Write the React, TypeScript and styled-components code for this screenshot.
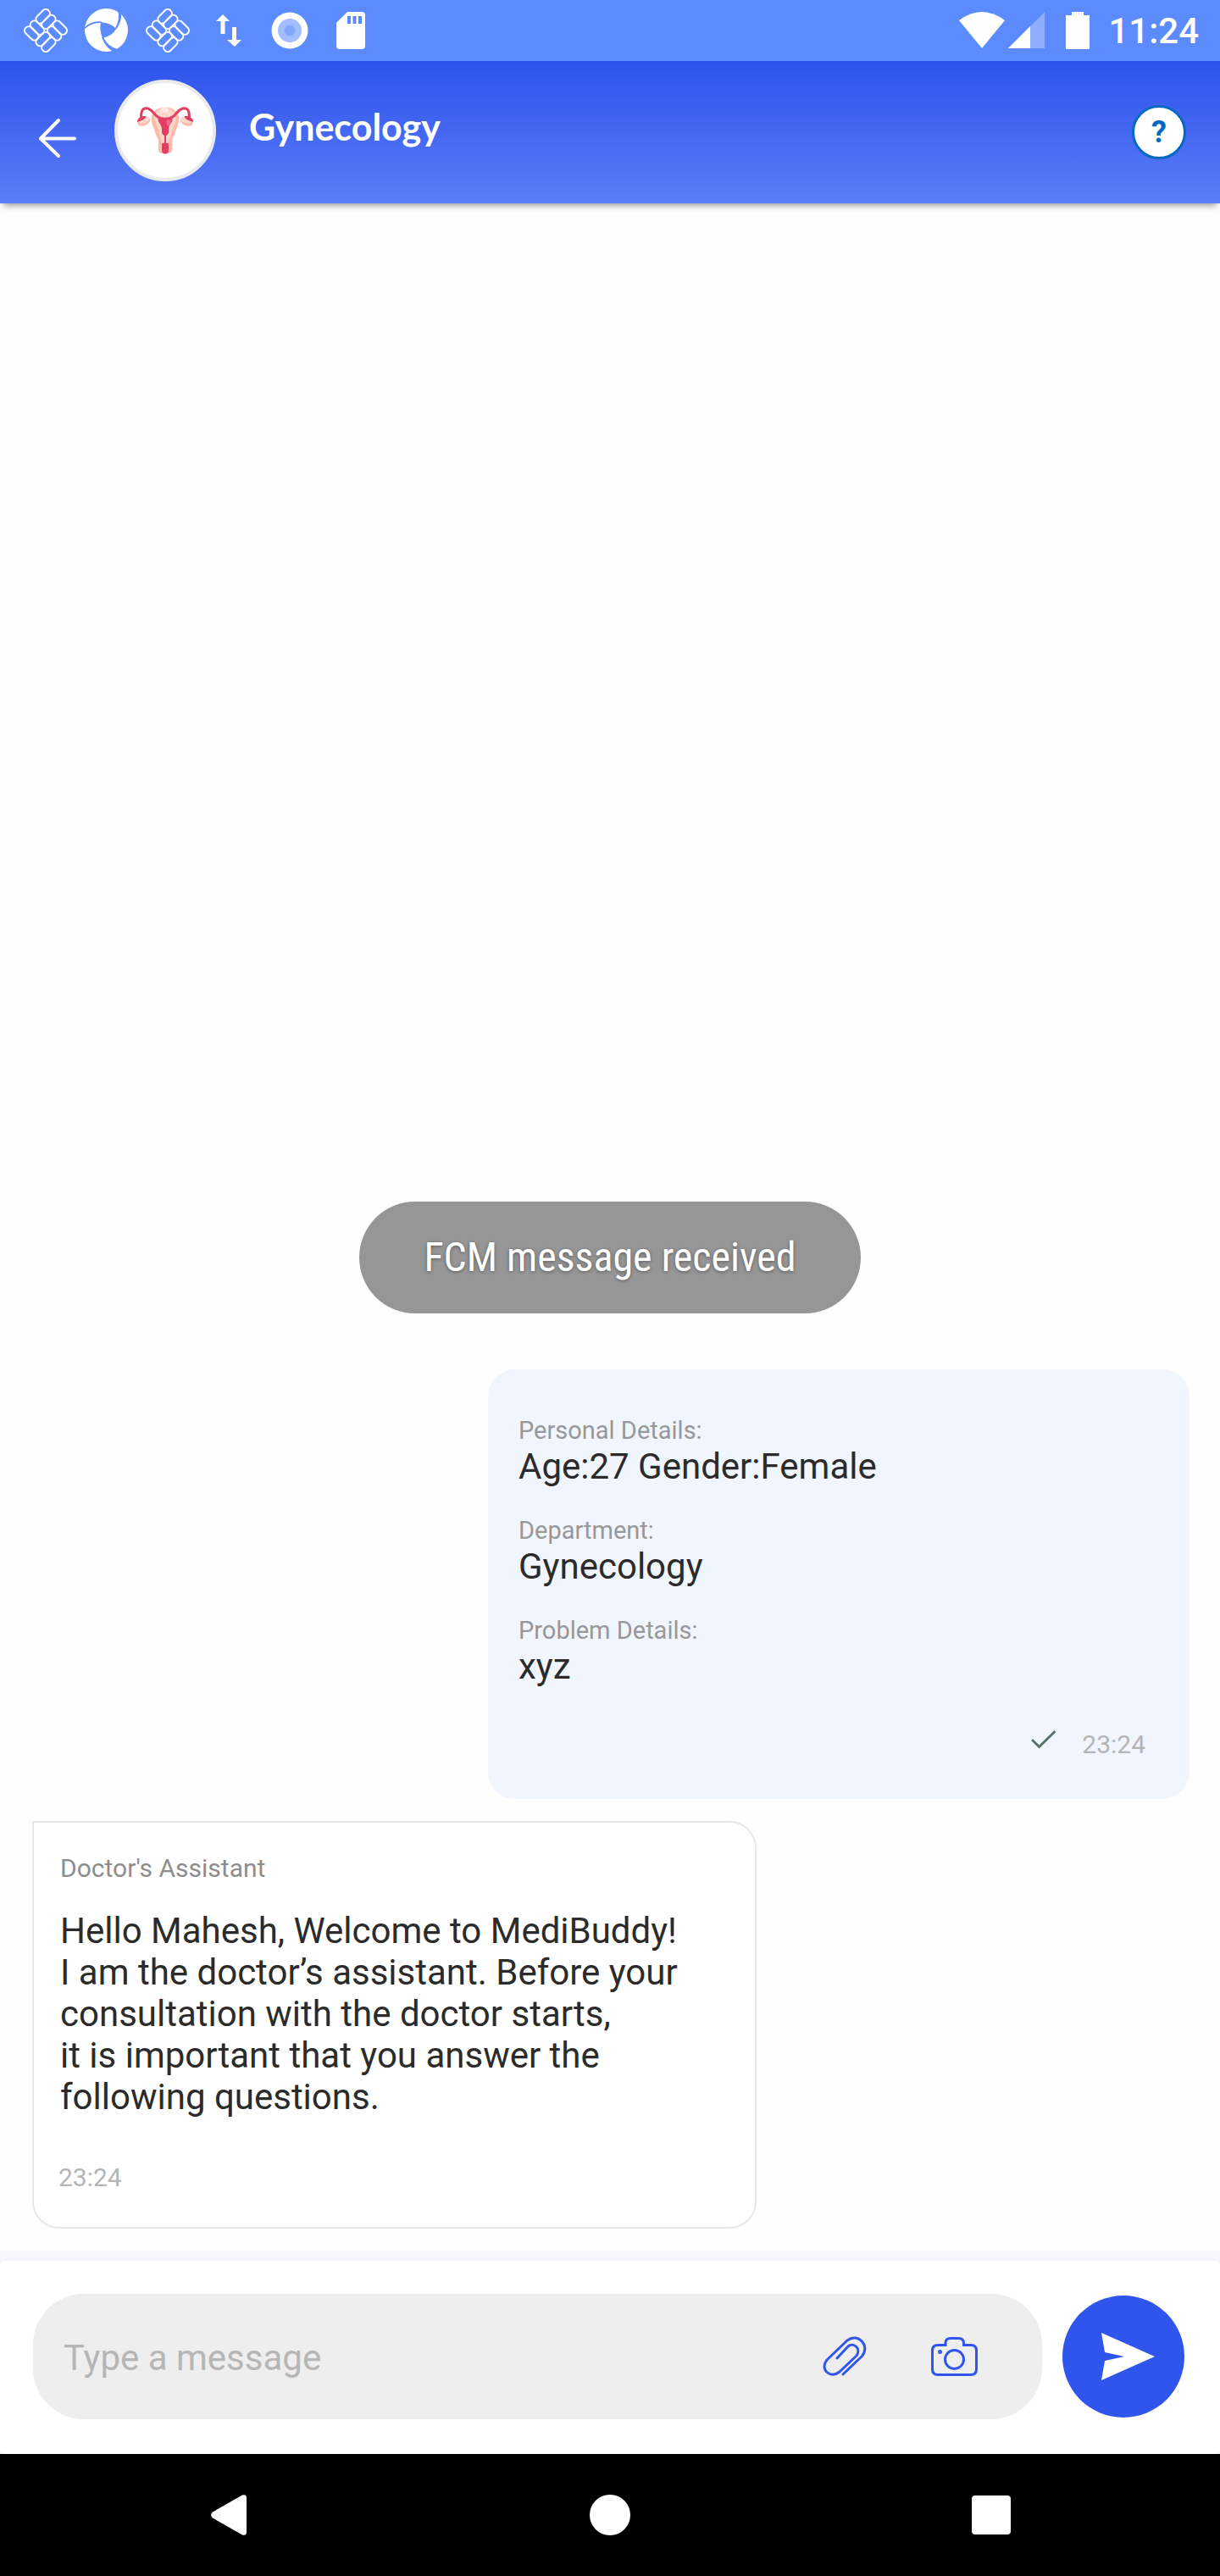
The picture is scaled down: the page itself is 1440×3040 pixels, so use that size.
import React from 'react';
import styled, { createGlobalStyle } from 'styled-components';

const GlobalStyle = createGlobalStyle`
  *, *::before, *::after { box-sizing: border-box; }
  body {
    margin: 0;
    background: #fefefe;
    font-family: Roboto, "Noto Sans", sans-serif;
    color: #2b2b2b;
  }
  h1, p, dl, dt, dd { margin: 0; }
  button { border: 0; padding: 0; background: none; font: inherit; cursor: pointer; }
  svg { display: block; flex: none; }
`;

const Screen = styled.div`
  display: flex;
  flex-direction: column;
  min-height: 100vh;
`;

const StatusBar = styled.div`
  display: flex;
  justify-content: space-between;
  align-items: center;
  height: 72px;
  padding: 0 25px 0 18px;
  background: #5c8bfd;
  color: #fff;
`;

const NotificationIcons = styled.div`
  display: grid;
  grid-auto-flow: column;
  grid-auto-columns: 72px;
  justify-items: center;
  align-items: center;
`;

const SystemIcons = styled.div`
  display: flex;
  align-items: center;
`;

const Battery = styled.svg`
  margin: 0 22px 0 24px;
`;

const Clock = styled.time`
  padding-top: 2px;
  font-size: 42px;
  line-height: 48px;
  font-weight: 500;
`;

const AppBar = styled.header`
  display: flex;
  align-items: center;
  height: 168px;
  padding: 0 40px 0 36px;
  background: linear-gradient(#2e53eb, #5a7df8);
  box-shadow: 0 6px 8px -4px rgba(0, 0, 0, 0.45);
  color: #fff;
`;

const BackButton = styled.button`
  width: 63px;
  margin-right: 36px;
  color: #fff;
  && { padding: 14px 0 0 8px; }
`;

const Avatar = styled.div`
  display: grid;
  place-items: center;
  width: 120px;
  height: 120px;
  margin-bottom: 4px;
  border: 4px solid #e9eaee;
  border-radius: 50%;
  background: #fff;
`;

const Title = styled.h1`
  flex: 1;
  padding: 0 0 12px 39px;
  font-family: Lato, "Open Sans", sans-serif;
  font-size: 43px;
  line-height: 50px;
  font-weight: 700;
`;

const HelpButton = styled.button`
  && {
    width: 64px;
    height: 64px;
    border: 3px solid #0569c4;
    border-radius: 50%;
    background: #fff;
    color: #0569c4;
    font-size: 36px;
    line-height: 58px;
    font-weight: 700;
  }
`;

const Chat = styled.main`
  flex: 1;
  display: flex;
  flex-direction: column;
  justify-content: flex-end;
  gap: 26px;
  padding: 40px 0 26px;
`;

const Toast = styled.div`
  align-self: center;
  margin-bottom: 40px;
  padding: 36px 76px;
  border-radius: 66px;
  background: #969696;
  color: #fff;
  font-family: "Roboto Condensed", Roboto, sans-serif;
  font-size: 48px;
  line-height: 60px;
  text-shadow: 0 1px 4px rgba(0, 0, 0, 0.4);
`;

const SentCard = styled.article`
  margin: 0 36px 0 40%;
  padding: 54px 52px 46px 36px;
  border-radius: 32px;
  background: #f0f5fe;
`;

const Details = styled.dl`
  display: flex;
  flex-direction: column;
  gap: 32px;
`;

const Label = styled.dt`
  font-size: 29px;
  line-height: 36px;
  color: #989898;
`;

const Value = styled.dd`
  font-size: 42px;
  line-height: 50px;
`;

const SentMeta = styled.div`
  display: flex;
  justify-content: flex-end;
  align-items: flex-start;
  gap: 30px;
  padding-top: 49px;
`;

const Stamp = styled.time`
  display: block;
  font-size: 30px;
  line-height: 36px;
  color: #b5b5b5;
`;

const ReceivedCard = styled.article`
  margin: 0 38% 0 38px;
  padding: 36px 29px 40px;
  border: 2px solid #e7e7e7;
  border-radius: 0 32px 32px 32px;
  background: #fff;
`;

const Sender = styled.p`
  padding-left: 2px;
  font-size: 30px;
  line-height: 36px;
  color: #8d8d8d;
`;

const Body = styled.p`
  padding: 31px 0 53px 2px;
  font-size: 42px;
  line-height: 49px;
  white-space: pre-line;
`;

const Footer = styled.footer`
  border-top: 12px solid #f4f6fc;
  background: #f4f6fc;
`;

const Composer = styled.form`
  display: flex;
  align-items: center;
  gap: 24px;
  padding: 39px 42px 41px 39px;
  border-radius: 6px;
  background: #fff;
`;

const Field = styled.div`
  flex: 1;
  display: flex;
  align-items: center;
  height: 148px;
  padding: 0 76px 0 36px;
  border-radius: 60px;
  background: #eee;
`;

const MessageInput = styled.input`
  flex: 1;
  min-width: 0;
  height: 62px;
  padding: 2px 0 0;
  border: 0;
  outline: 0;
  background: none;
  font: 42px/60px Roboto, "Noto Sans", sans-serif;
  color: #2b2b2b;
  &::placeholder { color: #b6b6b6; opacity: 1; }
`;

const AttachButton = styled.button`
  && { margin-left: 76px; }
`;

const SendButton = styled.button`
  && {
    display: grid;
    place-items: center;
    width: 144px;
    height: 144px;
    padding-left: 10px;
    border-radius: 50%;
    background: #2f55ec;
  }
`;

const NavBar = styled.nav`
  display: grid;
  grid-template-columns: repeat(3, 1fr);
  height: 144px;
  padding: 0 45px;
  background: #000;
`;

const NavButton = styled.button`
  display: grid;
  place-items: center;
`;

/* Four woven cells of two strands, turned to stand on a corner. */
function WeaveIcon() {
  const strands = [0, 1];
  return (
    <svg width="52" height="52" viewBox="0 0 52 52" fill="none" stroke="#fff" strokeWidth="2" aria-hidden="true">
      <g transform="rotate(45 26 26)">
        {strands.map((i) => (
          <React.Fragment key={i}>
            <rect x={7 + i * 9.5} y="7" width="9.5" height="19" rx="4.5" />
            <rect x="26" y={7 + i * 9.5} width="19" height="9.5" rx="4.5" />
            <rect x="7" y={26 + i * 9.5} width="19" height="9.5" rx="4.5" />
            <rect x={26 + i * 9.5} y="26" width="9.5" height="19" rx="4.5" />
          </React.Fragment>
        ))}
      </g>
    </svg>
  );
}

function SwirlIcon() {
  return (
    <svg width="52" height="52" viewBox="0 0 52 52" aria-hidden="true">
      <circle cx="25.5" cy="25.5" r="25.5" fill="#fff" />
      <g fill="#5c8bfd">
        <path d="M19 16Q31 17 37 24Q33 32 21 35Q17 25 19 16Z" />
        <path d="M0 22Q8 14 20 15.500L20 17Q9 16 0 24Z" />
        <path d="M39 0L43 6Q44 15 37 25L36 23Q42 14 39 0Z" />
        <path d="M22 34Q27 45 39 48L34 51Q25 47 20 34Z" />
      </g>
    </svg>
  );
}

function TransferIcon() {
  return (
    <svg width="30" height="40" viewBox="0 0 30 40" fill="#fff" aria-hidden="true">
      <path d="M8 1L16 9H10.500V24H5.500V9H0Z" />
      <path d="M22 39L30 31H24V16H19V31H13Z" />
    </svg>
  );
}

function RecordIcon() {
  return (
    <svg width="44" height="44" viewBox="0 0 44 44" aria-hidden="true">
      <circle cx="22" cy="22" r="21.500" fill="#fff" />
      <circle cx="22" cy="22" r="14" fill="#a3bfff" />
      <circle cx="22" cy="22" r="6.500" fill="#82a8ff" />
    </svg>
  );
}

function SdCardIcon() {
  return (
    <svg width="34" height="44" viewBox="0 0 34 44" aria-hidden="true">
      <path d="M13 0H30Q34 0 34 4V40Q34 44 30 44H4Q0 44 0 40V13Z" fill="#fff" />
      <path d="M13 5h4v9h-4zM19.500 5h4v9h-4zM26 5h4v9h-4z" fill="#5c8bfd" />
    </svg>
  );
}

function UterusIcon() {
  return (
    <svg width="70" height="60" viewBox="0 0 210 180" role="img" aria-label="Gynecology department">
      <path d="M105 8C134 8 155 24 154 48C153 72 142 84 140 98C138 112 128 114 129 130V160Q129 170 119 170H91Q81 170 81 160V130C82 114 72 112 70 98C68 84 57 72 56 48C55 24 76 8 105 8Z" fill="#ffbba8" />
      <path d="M105 12C130 12 143 26 143 46C142 64 129 80 127 98C124 112 118 116 118 134V164H92V134C92 116 86 112 83 98C81 80 68 64 67 46C67 26 80 12 105 12Z" fill="#ffd6cc" />
      <ellipse cx="103" cy="18" rx="14" ry="9" fill="#ffe9e4" />
      <path d="M80 46H130C134 60 118 68 117 84V98Q114 106 108 108V134H116Q117 138 117 160Q117 173 105 173Q93 173 93 160Q93 138 94 134H102V108Q96 106 93 98V84C92 68 76 60 80 46Z" fill="#e23d63" />
      <path d="M110 46H124Q126 60 120 74Q110 74 110 62Z" fill="#ee6a8b" />
      <g fill="none" stroke="#e23d63" strokeWidth="9">
        <path d="M105 49C62 49 66 11 37 11Q20 12 20 36V44" />
        <path d="M105 49C148 49 144 11 173 11Q190 12 190 36V44" />
      </g>
      <ellipse cx="29" cy="58" rx="23" ry="15" fill="#ffbba8" transform="rotate(-22 29 58)" />
      <ellipse cx="31" cy="53" rx="19" ry="11" fill="#ffd6cc" transform="rotate(-22 31 53)" />
      <path d="M5 60Q8 40 30 39L38 40Q34 54 5 60Z" fill="#e23d63" />
      <ellipse cx="181" cy="58" rx="23" ry="15" fill="#ffbba8" transform="rotate(22 181 58)" />
      <ellipse cx="179" cy="53" rx="19" ry="11" fill="#ffd6cc" transform="rotate(22 179 53)" />
      <path d="M205 60Q202 40 180 39L172 40Q176 54 205 60Z" fill="#e23d63" />
    </svg>
  );
}

export default function App() {
  return (
    <>
      <GlobalStyle />
      <Screen>
        <StatusBar>
          <NotificationIcons>
            <WeaveIcon />
            <SwirlIcon />
            <WeaveIcon />
            <TransferIcon />
            <RecordIcon />
            <SdCardIcon />
          </NotificationIcons>
          <SystemIcons>
            <svg width="102" height="44" viewBox="0 0 102 44" fill="#fff" aria-hidden="true">
              <path d="M0 10Q27 -10 54 10L27 43Z" />
              <path d="M101 0V43H58Z" fillOpacity="0.3" />
              <path d="M84 17V43H58Z" />
            </svg>
            <Battery width="28" height="44" viewBox="0 0 28 44" fill="#fff" aria-hidden="true">
              <path d="M7 0H21V4H28V44H0V4H7Z" />
            </Battery>
            <Clock>11:24</Clock>
          </SystemIcons>
        </StatusBar>

        <AppBar>
          <BackButton type="button" aria-label="Back">
            <svg width="48" height="48" viewBox="0 0 48 48" fill="none" stroke="currentColor" strokeWidth="4" strokeLinecap="round" strokeLinejoin="round">
              <path d="M25 3L4 24.500L25 45M4 24.500H44" />
            </svg>
          </BackButton>
          <Avatar><UterusIcon /></Avatar>
          <Title>Gynecology</Title>
          <HelpButton type="button" aria-label="Help">?</HelpButton>
        </AppBar>

        <Chat>
          <Toast role="status">FCM message received</Toast>
          <SentCard>
            <Details>
              <div>
                <Label>Personal Details:</Label>
                <Value>Age:27 Gender:Female</Value>
              </div>
              <div>
                <Label>Department:</Label>
                <Value>Gynecology</Value>
              </div>
              <div>
                <Label>Problem Details:</Label>
                <Value>xyz</Value>
              </div>
            </Details>
            <SentMeta>
              <svg width="30" height="24" viewBox="0 0 30 24" fill="none" stroke="#58736a" strokeWidth="3" role="img" aria-label="Sent">
                <path d="M1 12L9.500 20.500L28.500 2" />
              </svg>
              <Stamp>23:24</Stamp>
            </SentMeta>
          </SentCard>
          <ReceivedCard>
            <Sender>Doctor's Assistant</Sender>
            <Body>
              {'Hello Mahesh, Welcome to MediBuddy!\nI am the doctor’s assistant. Before your consultation with the doctor starts,\nit is important that you answer the following questions.'}
            </Body>
            <Stamp>23:24</Stamp>
          </ReceivedCard>
        </Chat>

        <Footer>
          <Composer onSubmit={(e) => e.preventDefault()}>
            <Field>
              <MessageInput type="text" aria-label="Message" placeholder="Type a message" />
              <AttachButton type="button" aria-label="Attach a file">
                <svg width="52" height="48" viewBox="0 0 52 48" fill="none" stroke="#2f55ec" strokeWidth="3" strokeLinecap="round" strokeLinejoin="round">
                  <path d="M24 45L46 24C57 12 42 -5 29 5L5 28C-4 39 9 51 20 42L40 23C46 14 36 7 30 12L17 26" />
                </svg>
              </AttachButton>
              <AttachButton type="button" aria-label="Take a photo">
                <svg width="55" height="48" viewBox="0 0 55 48" fill="none" stroke="#2f55ec" strokeWidth="3">
                  <path d="M8 10.500H17V8Q17 2.500 23 2.500H32Q38.500 2.500 38.500 8V10.500H47Q53.500 10.500 53.500 17V39Q53.500 45.500 47 45.500H8Q1.500 45.500 1.500 39V17Q1.500 10.500 8 10.500Z" />
                  <circle cx="27.500" cy="27.500" r="11" />
                  <circle cx="10.500" cy="18.500" r="1.500" strokeWidth="2" />
                </svg>
              </AttachButton>
            </Field>
            <SendButton type="submit" aria-label="Send">
              <svg width="64" height="56" viewBox="0 0 64 56" fill="#fff">
                <path d="M1 0L64 28L1 56L5 33L28 28L5 23Z" />
              </svg>
            </SendButton>
          </Composer>
        </Footer>

        <NavBar aria-label="System">
          <NavButton type="button" aria-label="Back">
            <svg width="42" height="48" viewBox="0 0 42 48" fill="#fff">
              <path d="M37 0.600Q42 -1 42 4V44Q42 49 37 47.400L2 27.500Q-2 24 2 20.500Z" />
            </svg>
          </NavButton>
          <NavButton type="button" aria-label="Home">
            <svg width="48" height="48" viewBox="0 0 48 48" fill="#fff">
              <circle cx="24" cy="24" r="24" />
            </svg>
          </NavButton>
          <NavButton type="button" aria-label="Recent apps">
            <svg width="46" height="46" viewBox="0 0 46 46" fill="#fff">
              <rect width="46" height="46" rx="4" />
            </svg>
          </NavButton>
        </NavBar>
      </Screen>
    </>
  );
}
